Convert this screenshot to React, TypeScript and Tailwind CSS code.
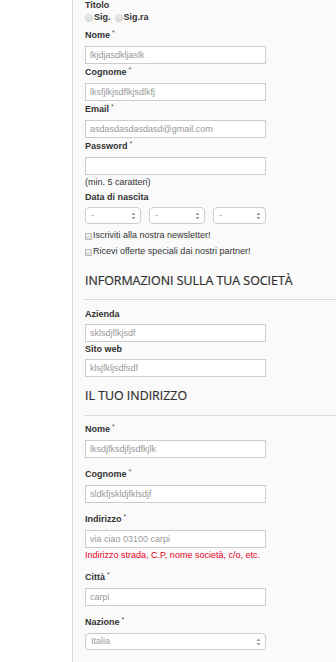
function Label({ text, req }: { text: string; req?: boolean }) {
  return (
    <div className="h-[11px] text-[9px] leading-[11px] font-bold text-[#333]">
      {text}
      {req && <sup className="ml-[2px] text-[7px] font-normal text-[#555] top-[-3px]">*</sup>}
    </div>
  );
}

function Field({ value }: { value: string }) {
  return (
    <div className="h-[18px] w-[181px] border border-[#ccc] bg-white px-[4px] text-[9px] leading-[16px] text-[#999]">
      {value}
    </div>
  );
}

function Arrows() {
  return (
    <svg width="5" height="8" viewBox="0 0 5 8" className="shrink-0">
      <path d="M2.5 0.5 L4.5 3 H0.5 Z" fill="#999" />
      <path d="M2.5 7.5 L4.5 5 H0.5 Z" fill="#999" />
    </svg>
  );
}

function Select({ value, w }: { value: string; w: string }) {
  return (
    <div className={`flex h-[17px] ${w} items-center justify-between rounded-[4px] border border-[#ccc] bg-white pl-[5px] pr-[4px] text-[9px] text-[#999]`}>
      <span>{value}</span>
      <Arrows />
    </div>
  );
}

function Radio({ text }: { text: string }) {
  return (
    <span className="flex items-center">
      <span className="h-[8px] w-[8px] rounded-full border border-[#d4d4d4] bg-gradient-to-b from-[#f2f2f2] to-[#d6d6d6]" />
      <span className="ml-[1px] text-[9px] font-bold text-[#333]">{text}</span>
    </span>
  );
}

function Check({ text }: { text: string }) {
  return (
    <div className="flex h-[16px] items-center">
      <span className="h-[7px] w-[7px] border border-[#bbb] bg-gradient-to-b from-[#eee] to-[#ddd]" />
      <span className="ml-[1px] text-[9px] text-[#333]">{text}</span>
    </div>
  );
}

function Heading({ text }: { text: string }) {
  return (
    <div className="text-[12.4px] leading-[16px] text-[#2e2e2e] font-['Open_Sans',sans-serif] [-webkit-text-stroke:0.2px_#2e2e2e]">{text}</div>
  );
}

export default function App() {
  return (
    <div className="flex min-h-[662px] bg-white font-['Liberation_Sans',Arial,sans-serif]">
      <div className="w-[72px] shrink-0 bg-white" />
      <div className="flex-1 border-l border-[#d8d8d8] bg-[#fafafa] pl-[12px]">
        <Label text="Titolo" />
        <div className="mt-[1px] flex h-[12px] items-center gap-[4px]">
          <Radio text="Sig." />
          <Radio text="Sig.ra" />
        </div>
        <div className="mt-[6px]">
          {[
            ["Nome", "lkjdjasdkljaslk"],
            ["Cognome", "lksfjlkjsdflkjsdlkfj"],
            ["Email", "asdasdasdasdasd@gmail.com"],
          ].map(([l, v]) => (
            <div key={l} className="mb-[3px]">
              <Label text={l} req />
              <div className="mt-[5px]">
                <Field value={v} />
              </div>
            </div>
          ))}
          <Label text="Password" req />
          <div className="mt-[5px]">
            <Field value="" />
          </div>
        </div>
        <div className="mt-[1px] h-[12px] text-[9px] leading-[12px] text-[#333]">(min. 5 caratteri)</div>
        <div className="mt-[4px]">
          <Label text="Data di nascita" />
        </div>
        <div className="mt-[4px] flex gap-[8px]">
          <Select value="-" w="w-[56px]" />
          <Select value="-" w="w-[56px]" />
          <Select value="-" w="w-[53px]" />
        </div>
        <div className="mt-[4px]">
          <Check text="Iscriviti alla nostra newsletter!" />
          <Check text="Ricevi offerte speciali dai nostri partner!" />
        </div>

        <div className="mt-[13px]">
          <Heading text="INFORMAZIONI SULLA TUA SOCIETÀ" />
        </div>
        <div className="mt-[10px] h-[1px] bg-[#d8d8d8]" />
        <div className="mt-[9px]">
          {[
            ["Azienda", "sklsdjflkjsdf"],
            ["Sito web", "klsjfkljsdfsdf"],
          ].map(([l, v]) => (
            <div key={l} className="mb-[2px]">
              <Label text={l} />
              <div className="mt-[4px]">
                <Field value={v} />
              </div>
            </div>
          ))}
        </div>

        <div className="mt-[11px]">
          <Heading text="IL TUO INDIRIZZO" />
        </div>
        <div className="mt-[11px] h-[1px] bg-[#d8d8d8]" />
        <div className="mt-[8px]">
          {[
            ["Nome", "lksdjfksdjfjsdfkjlk"],
            ["Cognome", "sldkfjskldjfklsdjf"],
          ].map(([l, v]) => (
            <div key={l} className="mb-[11px]">
              <Label text={l} req />
              <div className="mt-[5px]">
                <Field value={v} />
              </div>
            </div>
          ))}
          <Label text="Indirizzo" req />
          <div className="mt-[5px]">
            <Field value="via ciao 03100 carpi" />
          </div>
          <div className="mt-[1px] h-[12px] text-[9px] leading-[12px] text-[#e8001c]">
            Indirizzo strada, C.P, nome società, c/o, etc.
          </div>
          <div className="mt-[11px]">
            <Label text="Città" req />
          </div>
          <div className="mt-[5px]">
            <Field value="carpi" />
          </div>
          <div className="mt-[11px]">
            <Label text="Nazione" req />
          </div>
          <div className="mt-[5px]">
            <Select value="Italia" w="w-[181px]" />
          </div>
        </div>
      </div>
    </div>
  );
}
